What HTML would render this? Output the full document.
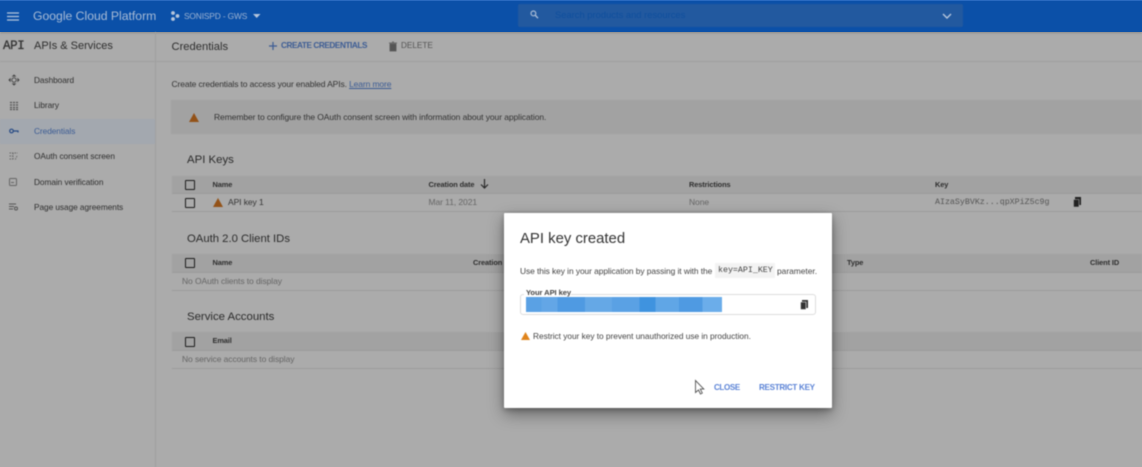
<!DOCTYPE html>
<html><head><meta charset="utf-8">
<style>
html,body{margin:0;padding:0;width:1142px;height:467px;overflow:hidden;background:#ababab;font-family:"Liberation Sans",sans-serif}
.t{position:absolute;white-space:nowrap;color:#333;font-size:8.5px;line-height:12px;letter-spacing:-.08px}
.b{position:absolute}
.wrap{position:absolute;left:0;top:0;width:1142px;height:467px;filter:blur(.4px)}
.h{font-size:11.400px;color:#2b2b2b;line-height:14px;letter-spacing:0}
.th{font-weight:bold;font-size:7.400px;color:#2e2e2e;letter-spacing:-.1px}
.cb{position:absolute;width:8px;height:8px;border:1.5px solid #1c1c1c;border-radius:1px}
.side{font-size:8.300px;color:#2f2f2f;letter-spacing:-.06px}
.line{position:absolute;height:1px;background:#9c9c9c}
.band{position:absolute;background:#a2a2a2}
.blue{color:#3c5c94;font-weight:bold}
svg{position:absolute;overflow:visible}
</style></head><body>
<div class="b" style="left:0;top:0;width:1142px;height:32px;background:#0b50a8;border-top:1px solid #2a6ac0;box-sizing:border-box;box-shadow:0 1px 2px #8a8a8a"></div>
<div class="wrap">
<!-- top bar -->
<svg style="left:7px;top:12px" width="13" height="9"><path d="M0 1h12M0 4.500h12M0 8h12" stroke="#b6c6dc" stroke-width="1.200"/></svg>
<div class="t" style="left:33px;top:8px;font-size:12.200px;line-height:16px;color:#a9bcd6;letter-spacing:0">Google Cloud Platform</div>
<svg style="left:170px;top:11px" width="10" height="11"><circle cx="3" cy="2" r="1.900" fill="#b6c6dc"/><circle cx="3" cy="8" r="1.900" fill="#b6c6dc"/><circle cx="7.500" cy="5" r="1.900" fill="#b6c6dc"/></svg>
<div class="t" style="left:184px;top:10px;font-size:8.400px;color:#9db3d2;letter-spacing:-.15px">SONISPD - GWS</div>
<svg style="left:253px;top:14px" width="8" height="5"><path d="M0 0h7.500L3.700 4z" fill="#b6c6dc"/></svg>
<div class="b" style="left:518px;top:4px;width:445px;height:23px;background:#22599f;border-radius:2px"></div>
<svg style="left:530px;top:10px" width="9" height="10"><circle cx="3.400" cy="3.400" r="2.400" fill="none" stroke="#a9bcd6" stroke-width="1.200"/><path d="M5 5l3 3.200" stroke="#a9bcd6" stroke-width="1.400"/></svg>
<div class="t" style="left:555px;top:9px;font-size:9.400px;color:#0f4f9e;letter-spacing:0">Search products and resources</div>
<svg style="left:942px;top:13px" width="10" height="7"><path d="M1 1l4 4 4-4" fill="none" stroke="#b6c6dc" stroke-width="1.400"/></svg>

<!-- sidebar & subheader -->
<div class="b" style="left:155px;top:32px;width:1px;height:435px;background:#a0a0a0"></div>
<div class="b" style="left:0;top:61px;width:1142px;height:1px;background:#9f9f9f"></div>
<div class="t" style="left:3px;top:39px;font-family:'Liberation Mono',monospace;font-size:12.500px;line-height:14px;color:#333;letter-spacing:-.4px;-webkit-text-stroke:.3px #333">API</div>
<div class="t" style="left:34px;top:39px;font-size:11px;line-height:14px;color:#2e2e2e;letter-spacing:0">APIs &amp; Services</div>
<div class="t" style="left:171.500px;top:39.500px;font-size:11.200px;line-height:14px;color:#2e2e2e;letter-spacing:0">Credentials</div>
<svg style="left:269px;top:42px" width="8" height="8"><path d="M4 0v8M0 4h8" stroke="#3c5c94" stroke-width="1.200"/></svg>
<div class="t blue" style="left:281px;top:40px;font-size:8.200px;letter-spacing:-.42px">CREATE CREDENTIALS</div>
<svg style="left:389px;top:42px" width="8" height="9"><path d="M1 2h6v7H1zM0 1h8M3 0h2" fill="#555" stroke="#555" stroke-width=".8"/></svg>
<div class="t" style="left:401px;top:40px;font-size:8.200px;color:#555;letter-spacing:0">DELETE</div>

<div class="b" style="left:0;top:119px;width:155px;height:25px;background:#a3a8af"></div>
<svg style="left:9px;top:75px" width="10" height="10" fill="none" stroke="#444" stroke-width=".9"><circle cx="5" cy="5" r="2.200"/><path d="M5 0l1.200 1.200H3.800zM5 10l1.200-1.200H3.800zM0 5l1.200-1.200v2.400zM10 5L8.800 3.800v2.400z" fill="#444"/></svg>
<svg style="left:10px;top:102px" width="8" height="8"><path d="M0 .5h8M0 3h8M0 5.500h8M0 7.500h8" stroke="#555" stroke-width="1.200" stroke-dasharray="2 1"/></svg>
<svg style="left:9px;top:128px" width="10" height="6" fill="none"><circle cx="2.500" cy="3" r="1.800" stroke="#264a85" stroke-width="1.200"/><path d="M4.500 3H9v1.500" stroke="#264a85" stroke-width="1.200"/></svg>
<svg style="left:9px;top:152px" width="9" height="9" fill="none" stroke="#666" stroke-width=".9" stroke-dasharray="1.500 1"><path d="M.5 1h8M.5 4h4M.5 7h4M4 1v7M8 4L6 8"/></svg>
<svg style="left:9px;top:178px" width="8" height="8" fill="none" stroke="#666"><rect x=".5" y=".5" width="7" height="7" rx="1"/><path d="M2 4.500h3"/></svg>
<svg style="left:9px;top:203px" width="9" height="8" fill="none" stroke="#555"><path d="M0 1h7M0 3.500h5M0 6h4"/><circle cx="7" cy="5.500" r="1.500"/></svg>
<div class="t side" style="left:34px;top:74px">Dashboard</div>
<div class="t side" style="left:34px;top:99px">Library</div>
<div class="t side" style="left:34px;top:125px;color:#3c5c94">Credentials</div>
<div class="t side" style="left:34px;top:150px">OAuth consent screen</div>
<div class="t side" style="left:34px;top:176px">Domain verification</div>
<div class="t side" style="left:34px;top:201px">Page usage agreements</div>

<!-- main -->
<div class="t" style="left:171.500px;top:78px;letter-spacing:-.12px">Create credentials to access your enabled APIs. <span style="color:#3c5c94;text-decoration:underline">Learn more</span></div>
<div class="band" style="left:171px;top:100px;width:971px;height:34px"></div>
<svg style="left:189px;top:113px" width="10" height="9"><path d="M5 0l5 9H0z" fill="#935218"/></svg>
<div class="t" style="left:214px;top:111px;color:#333">Remember to configure the OAuth consent screen with information about your application.</div>

<div class="t h" style="left:187px;top:153px">API Keys</div>
<div class="band" style="left:172px;top:176px;width:970px;height:17px"></div>
<div class="line" style="left:172px;top:193px;width:970px"></div>
<div class="line" style="left:172px;top:211px;width:970px"></div>
<div class="cb" style="left:185px;top:180px"></div>
<div class="cb" style="left:185px;top:198px"></div>
<div class="t th" style="left:212.500px;top:178.500px">Name</div>
<div class="t th" style="left:428.500px;top:178.500px">Creation date</div>
<svg style="left:480px;top:179px" width="9" height="10"><path d="M4.500 0v8.500M1 5.500l3.500 3.500 3.500-3.500" fill="none" stroke="#2a2a2a" stroke-width="1.200"/></svg>
<div class="t th" style="left:689px;top:178.500px">Restrictions</div>
<div class="t th" style="left:935px;top:178.500px">Key</div>
<svg style="left:213px;top:198px" width="10" height="9"><path d="M5 0l5 9H0z" fill="#935218"/></svg>
<div class="t" style="left:228px;top:196px">API key 1</div>
<div class="t" style="left:428.500px;top:196px;color:#666">Mar 11, 2021</div>
<div class="t" style="left:689px;top:196px;color:#666">None</div>
<div class="t" style="left:935px;top:196.500px;color:#555;font-family:'Liberation Mono',monospace;font-size:8.300px;letter-spacing:0">AIzaSyBVKz...qpXPiZ5c9g</div>
<svg style="left:1073px;top:197px" width="9" height="11"><path d="M2 0h6v8H2z" fill="#222"/><path d="M.5 2.500h5.500v7.500H.5z" fill="#222" stroke="#aaa" stroke-width=".6"/></svg>

<div class="t h" style="left:187px;top:232px;font-size:11.300px">OAuth 2.0 Client IDs</div>
<div class="band" style="left:172px;top:254px;width:970px;height:18px"></div>
<div class="line" style="left:172px;top:272px;width:970px"></div>
<div class="line" style="left:172px;top:290px;width:970px"></div>
<div class="cb" style="left:185px;top:258px"></div>
<div class="t th" style="left:212.500px;top:256.500px">Name</div>
<div class="t th" style="left:473px;top:256.500px">Creation date</div>
<div class="t th" style="left:847px;top:256.500px">Type</div>
<div class="t th" style="left:1090px;top:256.500px">Client ID</div>
<div class="t" style="left:182px;top:275px;color:#666">No OAuth clients to display</div>

<div class="t h" style="left:187px;top:310px">Service Accounts</div>
<div class="band" style="left:172px;top:332px;width:970px;height:18px"></div>
<div class="line" style="left:172px;top:350px;width:970px"></div>
<div class="line" style="left:172px;top:368px;width:970px"></div>
<div class="cb" style="left:185px;top:337px"></div>
<div class="t th" style="left:212.500px;top:335px">Email</div>
<div class="t" style="left:182px;top:353px;color:#666">No service accounts to display</div>

<!-- dialog -->
<div class="b" style="left:504px;top:213px;width:328px;height:195px;background:#fff;border-radius:1px;box-shadow:0 6px 16px rgba(0,0,0,.4),0 2px 6px rgba(0,0,0,.25)"></div>
<div class="t" style="left:520px;top:230px;font-size:14.900px;line-height:18px;color:#333;letter-spacing:0">API key created</div>
<div class="t" style="left:520px;top:265px;color:#444;font-size:8.400px;letter-spacing:-.06px">Use this key in your application by passing it with the</div>
<div class="b" style="left:715px;top:263px;width:60px;height:15px;background:#f3f3f3"></div>
<div class="t" style="left:718px;top:265px;font-family:'Liberation Mono',monospace;font-size:8.300px;color:#444;letter-spacing:0">key=API_KEY</div>
<div class="t" style="left:777px;top:265px;color:#444;font-size:8.400px;letter-spacing:0">parameter.</div>
<div class="b" style="left:520px;top:294px;width:296px;height:21px;border:1px solid #ddd;border-radius:3px;box-sizing:border-box"></div>
<div class="b" style="left:524px;top:287px;width:47px;height:9px;background:#fff"></div>
<div class="t" style="left:526px;top:287px;font-size:7.600px;line-height:11px;font-weight:bold;color:#444">Your API key</div>
<div class="b" style="left:526px;top:297px;width:196px;height:15px;background:linear-gradient(90deg,#5aa1e4 0 8%,#63a6e6 8% 16%,#4f9ae2 16% 30%,#65a8e6 30% 44%,#5aa1e4 44% 58%,#3f93df 58% 66%,#60a6e6 66% 78%,#4f9ae2 78% 90%,#6badea 90%)"></div>
<svg style="left:800px;top:300px" width="9" height="10"><path d="M2 0h6v8H2z" fill="#333"/><path d="M.5 2h5.500v7.500H.5z" fill="#333" stroke="#fff" stroke-width=".6"/></svg>
<svg style="left:521px;top:332px" width="9" height="8"><path d="M4.500 0L9 8H0z" fill="#e0841c"/></svg>
<div class="t" style="left:533px;top:330px;color:#444;font-size:8.300px;letter-spacing:-.02px">Restrict your key to prevent unauthorized use in production.</div>
<div class="t" style="left:714px;top:381.500px;font-size:8px;font-weight:bold;color:#5b83d6;letter-spacing:-.35px">CLOSE</div>
<div class="t" style="left:759px;top:381.500px;font-size:8.100px;font-weight:bold;color:#5b83d6;letter-spacing:-.3px">RESTRICT KEY</div>
<svg style="left:695px;top:380px" width="10" height="15"><path d="M.5.500v12l3-2.500 2 4 1.800-.9-2-4h3.500z" fill="#fff" stroke="#555" stroke-width=".9"/></svg>
</div>
</body></html>
